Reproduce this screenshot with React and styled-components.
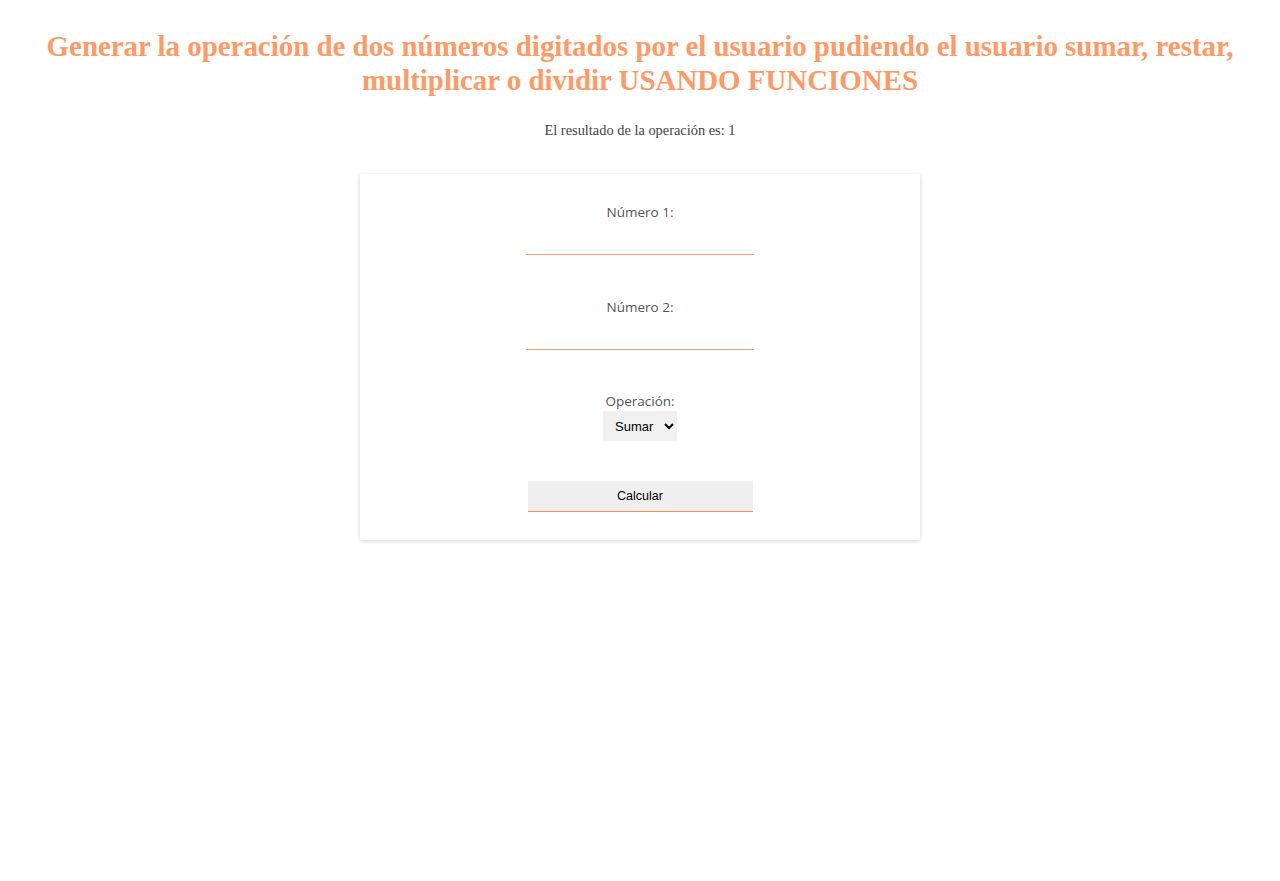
import styled, { createGlobalStyle } from "styled-components";

const GlobalStyle = createGlobalStyle`
  body {
    margin: 8px;
    background: #fff;
    font-family: "Liberation Serif", "Times New Roman", serif;
  }
`;

const App = () => {
  return (
    <>
      <GlobalStyle />
      <Title>
        Generar la operación de dos números digitados por el usuario pudiendo
        el usuario sumar, restar, multiplicar o dividir USANDO FUNCIONES
      </Title>
      <Result>El resultado de la operación es: 1</Result>
      <Card>
        <Field $gap={43}>
          <Label>Número 1:</Label>
          <Input type="text" />
        </Field>
        <Field $gap={42}>
          <Label>Número 2:</Label>
          <Input type="text" />
        </Field>
        <Field $gap={40}>
          <Label>Operación:</Label>
          <Select defaultValue="sumar">
            <option value="sumar">Sumar</option>
            <option value="restar">Restar</option>
            <option value="multiplicar">Multiplicar</option>
            <option value="dividir">Dividir</option>
          </Select>
        </Field>
        <Button>Calcular</Button>
      </Card>
    </>
  );
};

export default App;

const Title = styled.h1`
  margin: 22px 30px 0;
  text-align: center;
  color: #ff9966;
  font-size: 28.9px;
  line-height: 33.5px;
  font-weight: bold;
`;

const Result = styled.p`
  margin: 23px 0 0;
  text-align: center;
  color: #444;
  font-size: 14.4px;
  line-height: 20px;
`;

const Card = styled.div`
  width: 560px;
  margin: 34px auto 24px;
  padding: 29px 0 28px;
  box-sizing: border-box;
  background: #fff;
  box-shadow: 0 1px 4px rgba(0, 0, 0, 0.18);
  display: flex;
  flex-direction: column;
  align-items: center;
`;

const Field = styled.div`
  display: flex;
  flex-direction: column;
  align-items: center;
  margin-bottom: ${(p) => p.$gap}px;
`;

const Label = styled.label`
  font-family: "Open Sans", "Noto Sans", sans-serif;
  font-size: 13.5px;
  line-height: 19px;
  color: #555;
`;

const Input = styled.input`
  width: 228px;
  height: 24px;
  margin-top: 9px;
  box-sizing: border-box;
  border: none;
  border-bottom: 1px solid #f4a070;
  outline: none;
  background: transparent;
  font-size: 14px;
`;

const Select = styled.select`
  width: 74px;
  height: 30px;
  border: none;
  background: #f0f0f0;
  font-family: "Liberation Sans", Arial, sans-serif;
  font-size: 13px;
  color: #000;
  padding: 0 6px 0 8px;
  outline: none;
`;

const Button = styled.button`
  width: 225px;
  height: 31px;
  border: none;
  border-bottom: 1px solid #ff9050;
  background: #efefef;
  font-family: "Liberation Sans", Arial, sans-serif;
  font-size: 12.5px;
  color: #000;
  cursor: pointer;
`;
